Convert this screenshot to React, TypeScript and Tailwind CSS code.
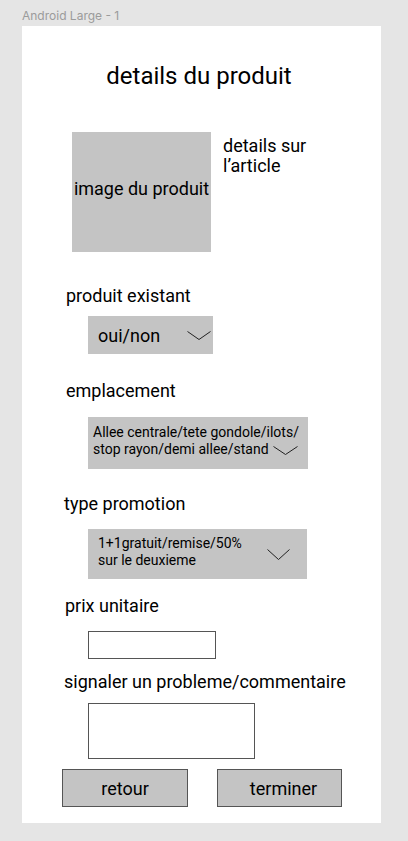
import React from "react";

function Chevron({ w = 24, h = 9 }: { w?: number; h?: number }) {
  return (
    <svg width={w} height={h} viewBox={`0 0 ${w} ${h}`} fill="none" className="shrink-0">
      <path d={`M0.5 0.5 L${w / 2} ${h - 0.5} L${w - 0.5} 0.5`} stroke="#222" strokeWidth="1" />
    </svg>
  );
}

export default function App() {
  return (
    <div
      className="w-[408px] h-[841px] bg-[#e5e5e5] overflow-hidden"
      style={{ fontFamily: "Roboto, 'Noto Sans', sans-serif" }}
    >
      <div
        className="pl-[22px] pt-[9px] h-[26px] text-[12px] leading-[14px] text-[#9b9b9b]"
        style={{ fontFamily: "Inter, sans-serif" }}
      >
        Android Large - 1
      </div>
      <div className="ml-[22px] w-[359px] h-[797px] bg-white flex flex-col text-black">
        <div className="mt-[36px] text-center pr-[5px] text-[24px] leading-[28px]">details du produit</div>

        <div className="mt-[42px] ml-[50px] flex">
          <div className="w-[139px] h-[120px] bg-[#c4c4c4] flex items-center justify-center text-[18px] leading-[21px] pb-[8px]">
            image du produit
          </div>
          <div className="ml-[12px] mt-[4px] text-[18px] leading-[20px]">
            details sur
            <br />
            l’article
          </div>
        </div>

        <div className="mt-[33px] ml-[44px] text-[18px] leading-[21px]">produit existant</div>
        <div className="mt-[10px] ml-[66px] w-[125px] h-[38px] bg-[#c4c4c4] flex items-center pl-[10px] pr-[2px] text-[18px]">
          <span className="flex-1">oui/non</span>
          <Chevron w={24} h={9} />
        </div>

        <div className="mt-[26px] ml-[44px] text-[18px] leading-[21px]">emplacement</div>
        <div className="mt-[16px] ml-[66px] w-[220px] h-[52px] bg-[#c4c4c4] pl-[5px] pt-[7px] text-[14px] leading-[17px]">
          <div>Allee centrale/tete gondole/ilots/</div>
          <div className="flex items-center">
            <span>stop rayon/demi allee/stand</span>
            <span className="ml-[4px] mt-[2px]"><Chevron w={25} h={9} /></span>
          </div>
        </div>

        <div className="mt-[24px] ml-[42px] text-[18px] leading-[21px]">type promotion</div>
        <div className="mt-[15px] ml-[66px] w-[219px] h-[50px] bg-[#c4c4c4] pl-[10px] pt-[6px] flex text-[14px] leading-[17px]">
          <div className="flex-1">
            1+1gratuit/remise/50%
            <br />
            sur le deuxieme
          </div>
          <div className="mr-[17px] mt-[14px]"><Chevron w={23} h={11} /></div>
        </div>

        <div className="mt-[16px] ml-[43px] text-[18px] leading-[21px]">prix unitaire</div>
        <div className="mt-[15px] ml-[66px] w-[128px] h-[28px] border border-[#555]"></div>

        <div className="mt-[12px] ml-[42px] text-[18px] leading-[21px]">signaler un probleme/commentaire</div>
        <div className="mt-[11px] ml-[66px] w-[167px] h-[56px] border border-[#555]"></div>

        <div className="mt-[10px] ml-[40px] flex">
          <div className="w-[126px] h-[38px] bg-[#c4c4c4] border border-[#555] flex items-center justify-center text-[18px]">
            retour
          </div>
          <div className="ml-[29px] w-[125px] h-[38px] bg-[#c4c4c4] border border-[#555] flex items-center justify-center pl-[8px] text-[18px]">
            terminer
          </div>
        </div>
      </div>
    </div>
  );
}
